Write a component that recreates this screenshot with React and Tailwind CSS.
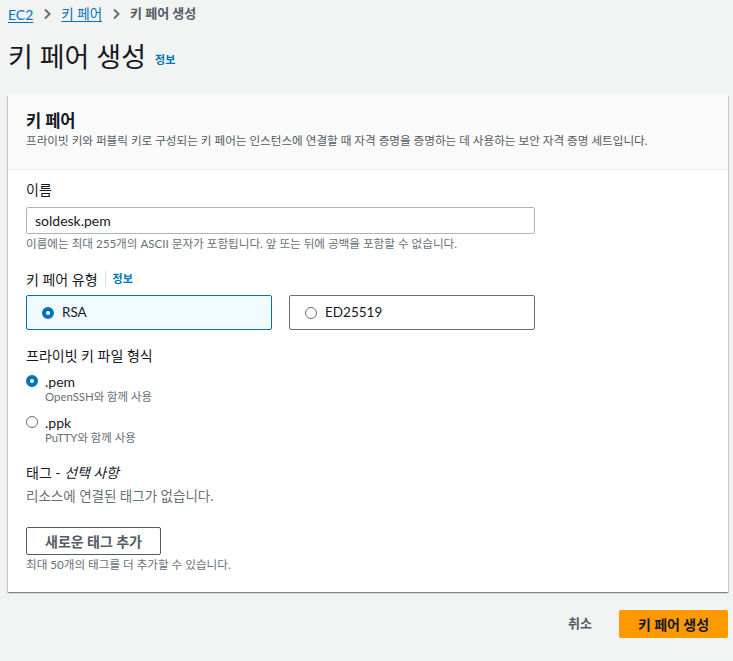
import { useState } from 'react';

const Chevron = () => (
  <svg width="12" height="12" viewBox="0 0 12 12" className="text-[#687078]">
    <path d="M4 1.5 L8.5 6 L4 10.5" fill="none" stroke="currentColor" strokeWidth="2" />
  </svg>
);

const Radio = ({ checked }) =>
  checked ? (
    <span className="inline-block w-[12px] h-[12px] rounded-full border-[4px] border-[#0073bb] bg-white shrink-0" />
  ) : (
    <span className="inline-block w-[12px] h-[12px] rounded-full border border-[#687078] bg-white shrink-0" />
  );

const App = () => {
  const [keyType, setKeyType] = useState('rsa');
  const [format, setFormat] = useState('pem');
  const [name, setName] = useState('soldesk.pem');

  return (
    <div className="min-h-[661px] bg-[#f2f3f3] pl-2 pr-[5px] text-[#16191f] font-['Lato','Noto_Sans_CJK_KR',sans-serif]">
      {/* breadcrumb */}
      <div className="h-7 flex items-center gap-[8px] text-[13px]">
        <a href="#" className="text-[#0073bb] underline underline-offset-2 text-[14px]">EC2</a>
        <Chevron />
        <a href="#" className="text-[#0073bb] underline underline-offset-2 text-[13.5px]">키 페어</a>
        <Chevron />
        <span className="text-[#545b64] font-bold text-[13px]">키 페어 생성</span>
      </div>

      <div className="mt-[11px] h-9 flex items-center gap-[9px]">
        <h1 className="text-[27px] leading-9">키 페어 생성</h1>
        <a href="#" className="text-[11px] font-bold text-[#0073bb] mt-[6px]">정보</a>
      </div>

      {/* card */}
      <div className="mt-5 bg-white shadow-[0_1px_1px_0_rgba(0,28,36,0.3),1px_1px_1px_0_rgba(0,28,36,0.15),-1px_1px_1px_0_rgba(0,28,36,0.15)]">
        <div className="bg-[#fafafa] border-b border-[#eaeded] px-[18px] pt-[15px] pb-[20px]">
          <h2 className="text-[16.5px] font-bold leading-[22px]">키 페어</h2>
          <p className="mt-[1px] text-[11.6px] leading-4 text-[#545b64]">
            프라이빗 키와 퍼블릭 키로 구성되는 키 페어는 인스턴스에 연결할 때 자격 증명을 증명하는 데 사용하는 보안 자격 증명 세트입니다.
          </p>
        </div>

        <div className="px-[18px] pt-[10px] pb-[19px]">
          <label className="block text-[14px] leading-5">이름</label>
          <input
            value={name}
            onChange={(e) => setName(e.target.value)}
            className="mt-[7px] block w-[509px] h-[27px] border border-[#aab7b8] rounded-[2px] px-[8px] text-[14px] outline-none"
          />
          <p className="mt-[2px] text-[11.6px] leading-4 text-[#687078]">
            이름에는 최대 255개의 ASCII 문자가 포함됩니다. 앞 또는 뒤에 공백을 포함할 수 없습니다.
          </p>

          <div className="mt-[17px] h-5 flex items-center text-[14px]">
            <span>키 페어 유형</span>
            <span className="mx-[7px] w-px h-[16px] bg-[#d5dbdb]" />
            <a href="#" className="text-[11px] font-bold text-[#0073bb]">정보</a>
          </div>
          <div className="mt-[6px] w-[509px] grid grid-cols-2 gap-[17px]">
            {[
              { id: 'rsa', label: 'RSA' },
              { id: 'ed', label: 'ED25519' },
            ].map((t) => (
              <div
                key={t.id}
                onClick={() => setKeyType(t.id)}
                className={
                  keyType === t.id
                    ? 'h-[35px] flex items-center gap-[8px] pl-[15px] border border-[#0073bb] bg-[#f1faff] rounded-[2px] cursor-pointer text-[13.5px]'
                    : 'h-[35px] flex items-center gap-[8px] pl-[15px] border border-[#687078] bg-white rounded-[2px] cursor-pointer text-[13.5px]'
                }
              >
                <Radio checked={keyType === t.id} />
                <span>{t.label}</span>
              </div>
            ))}
          </div>

          <div className="mt-[16px] text-[14px] leading-5">프라이빗 키 파일 형식</div>
          {[
            { id: 'pem', label: '.pem', sub: 'OpenSSH와 함께 사용' },
            { id: 'ppk', label: '.ppk', sub: 'PuTTY와 함께 사용' },
          ].map((f, i) => (
            <div key={f.id} className={i === 0 ? 'mt-[7px] cursor-pointer' : 'mt-[9px] cursor-pointer'} onClick={() => setFormat(f.id)}>
              <div className="flex items-center gap-[7px] h-4 text-[14px]">
                <Radio checked={format === f.id} />
                <span>{f.label}</span>
              </div>
              <div className="pl-[19px] text-[11.4px] leading-4 text-[#687078]">{f.sub}</div>
            </div>
          ))}

          <div className="mt-[17px] text-[14px] leading-5">
            태그 - <i>선택 사항</i>
          </div>
          <p className="mt-[4px] text-[13.5px] leading-[18px] text-[#687078]">리소스에 연결된 태그가 없습니다.</p>
          <button className="mt-[22px] block h-[28px] w-[135px] border border-[#545b64] rounded-[2px] bg-white text-[14px] font-bold text-[#545b64]">
            새로운 태그 추가
          </button>
          <p className="mt-[2px] text-[11.6px] leading-4 text-[#687078]">최대 50개의 태그를 더 추가할 수 있습니다.</p>
        </div>
      </div>

      {/* footer */}
      <div className="mt-[18px] flex justify-end items-center gap-[27px]">
        <button className="text-[13px] font-bold text-[#545b64]">취소</button>
        <button className="h-[28px] w-[109px] bg-[#ff9900] rounded-[2px] text-[14px] font-bold text-[#16191f]">키 페어 생성</button>
      </div>
    </div>
  );
};

export default App;
